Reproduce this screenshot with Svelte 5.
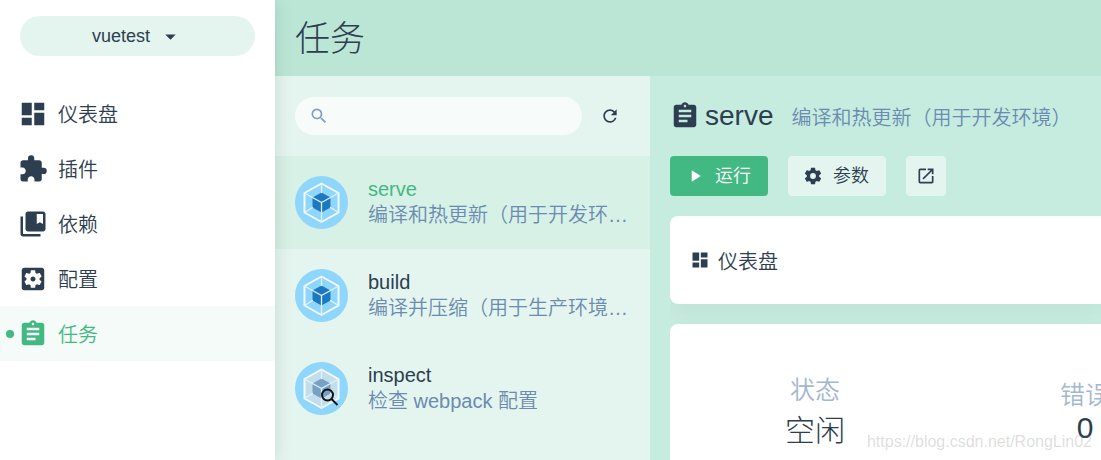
<script lang="ts">
	interface Task {
		name: string;
		description: string;
		inspect?: boolean;
	}

	const icons = {
		dashboard: 'M3 13h8V3H3v10zm0 8h8v-6H3v6zm10 0h8V11h-8v10zm0-18v6h8V3h-8z',
		extension:
			'M20.5 11H19V7c0-1.1-.9-2-2-2h-4V3.5a2.5 2.5 0 0 0-5 0V5H4c-1.1 0-1.99.9-1.99 2v3.8H3.5c1.49 0 2.7 1.21 2.7 2.7s-1.21 2.7-2.7 2.7H2V20c0 1.1.9 2 2 2h3.8v-1.5c0-1.49 1.21-2.7 2.7-2.7 1.49 0 2.7 1.21 2.7 2.7V22H17c1.1 0 2-.9 2-2v-4h1.5a2.5 2.5 0 0 0 0-5z',
		collections:
			'M4 6H2v14c0 1.1.9 2 2 2h14v-2H4V6zM20 2H8c-1.1 0-2 .9-2 2v12c0 1.1.9 2 2 2h12c1.1 0 2-.9 2-2V4c0-1.1-.9-2-2-2zm0 10l-2.5-1.5L15 12V4h5v8z',
		configuration:
			'M12 10c-1.1 0-2 .9-2 2s.9 2 2 2 2-.9 2-2-.9-2-2-2zm7-7H5c-1.11 0-2 .9-2 2v14c0 1.1.89 2 2 2h14c1.11 0 2-.9 2-2V5c0-1.1-.89-2-2-2zm-1.75 9c0 .23-.02.46-.05.68l1.48 1.16c.13.11.17.3.08.45l-1.4 2.42c-.09.15-.27.21-.43.15l-1.74-.7c-.36.28-.76.51-1.18.69l-.26 1.85c-.03.17-.18.3-.35.3h-2.8c-.17 0-.32-.13-.35-.29l-.26-1.85c-.43-.18-.82-.41-1.18-.69l-1.74.7c-.16.06-.34 0-.43-.15l-1.4-2.42c-.09-.15-.05-.34.08-.45l1.48-1.16c-.03-.23-.05-.46-.05-.69 0-.23.02-.46.05-.68l-1.48-1.16c-.13-.11-.17-.3-.08-.45l1.4-2.42c.09-.15.27-.21.43-.15l1.74.7c.36-.28.76-.51 1.18-.69l.26-1.85c.03-.17.18-.3.35-.3h2.8c.17 0 .32.13.35.29l.26 1.85c.43.18.82.41 1.18.69l1.74-.7c.16-.06.34 0 .43.15l1.4 2.42c.09.15.05.34-.08.45l-1.48 1.16c.03.23.05.46.05.69z',
		assignment:
			'M19 3h-4.18C14.4 1.84 13.3 1 12 1c-1.3 0-2.4.84-2.82 2H5c-1.1 0-2 .9-2 2v14c0 1.1.9 2 2 2h14c1.1 0 2-.9 2-2V5c0-1.1-.9-2-2-2zm-7 0c.55 0 1 .45 1 1s-.45 1-1 1-1-.45-1-1 .45-1 1-1zm2 14H7v-2h7v2zm3-4H7v-2h10v2zm0-4H7V7h10v2z',
		search:
			'M15.5 14h-.79l-.28-.27A6.471 6.471 0 0 0 16 9.5 6.5 6.5 0 1 0 9.5 16c1.61 0 3.09-.59 4.23-1.57l.27.28v.79l5 4.99L20.49 19l-4.99-5zm-6 0C7.01 14 5 11.99 5 9.5S7.01 5 9.5 5 14 7.01 14 9.5 11.99 14 9.5 14z',
		refresh:
			'M17.65 6.35A7.958 7.958 0 0 0 12 4c-4.42 0-7.99 3.58-7.99 8s3.57 8 7.99 8c3.73 0 6.84-2.55 7.73-6h-2.08A5.99 5.99 0 0 1 12 18c-3.31 0-6-2.69-6-6s2.69-6 6-6c1.66 0 3.14.69 4.22 1.78L13 11h7V4l-2.35 2.35z',
		settings:
			'M12 15.5A3.5 3.5 0 0 1 8.5 12 3.5 3.5 0 0 1 12 8.5a3.5 3.5 0 0 1 3.5 3.5 3.5 3.5 0 0 1-3.5 3.5M19.43 12.97C19.47 12.65 19.5 12.33 19.5 12C19.5 11.67 19.47 11.34 19.43 11L21.54 9.37C21.73 9.22 21.78 8.95 21.66 8.73L19.66 5.27C19.54 5.05 19.27 4.96 19.05 5.05L16.56 6.05C16.04 5.66 15.5 5.32 14.87 5.07L14.5 2.42C14.46 2.18 14.25 2 14 2H10C9.75 2 9.54 2.18 9.5 2.42L9.13 5.07C8.5 5.32 7.96 5.66 7.44 6.05L4.95 5.05C4.73 4.96 4.46 5.05 4.34 5.27L2.34 8.73C2.21 8.95 2.27 9.22 2.46 9.37L4.57 11C4.53 11.34 4.5 11.67 4.5 12C4.5 12.33 4.53 12.65 4.57 12.97L2.46 14.63C2.27 14.78 2.21 15.05 2.34 15.27L4.34 18.73C4.46 18.95 4.73 19.03 4.95 18.95L7.44 17.94C7.96 18.34 8.5 18.68 9.13 18.93L9.5 21.58C9.54 21.82 9.75 22 10 22H14C14.25 22 14.46 21.82 14.5 21.58L14.87 18.93C15.5 18.67 16.04 18.34 16.56 17.94L19.05 18.95C19.27 19.03 19.54 18.95 19.66 18.73L21.66 15.27C21.78 15.05 21.73 14.78 21.54 14.63L19.43 12.97Z',
		open: 'M19 19H5V5h7V3H5a2 2 0 0 0-2 2v14a2 2 0 0 0 2 2h14c1.1 0 2-.9 2-2v-7h-2v7zM14 3v2h3.59l-9.83 9.83 1.41 1.41L19 6.41V10h2V3h-7z',
		play: 'M8 5v14l11-7z',
		dropdown: 'M7 10l5 5 5-5z'
	};

	const views = [
		{ id: 'dashboard', label: '仪表盘', icon: icons.dashboard },
		{ id: 'plugins', label: '插件', icon: icons.extension },
		{ id: 'dependencies', label: '依赖', icon: icons.collections },
		{ id: 'configuration', label: '配置', icon: icons.configuration },
		{ id: 'tasks', label: '任务', icon: icons.assignment }
	];

	const tasks: Task[] = [
		{ name: 'serve', description: '编译和热更新（用于开发环境）' },
		{ name: 'build', description: '编译并压缩（用于生产环境…' },
		{ name: 'inspect', description: '检查 webpack 配置', inspect: true }
	];

	const stats = [
		{ label: '状态', value: '空闲' },
		{ label: '错误', value: '0' }
	];

	let currentView = $state('tasks');
	let selected = $state(0);
	let search = $state('');

	let task = $derived(tasks[selected]);
</script>

{#snippet icon(path: string)}
	<svg class="icon" viewBox="0 0 24 24" aria-hidden="true"><path d={path}></path></svg>
{/snippet}

{#snippet webpack(inspect: boolean | undefined)}
	<svg class="task-logo" viewBox="0 0 53 53" aria-hidden="true">
		<circle cx="26.5" cy="26.5" r="26.5" fill="#8ed6fb"></circle>
		<g stroke-linejoin="round" stroke-linecap="round">
			<path
				d="M26.5 7.5 43.5 17v19.5l-17 9.5-17-9.5V17z"
				fill={inspect ? '#c3deeb' : '#8ed6fb'}
				stroke="#f4fafe"
				stroke-width="2"
			></path>
			<path
				d="M26.5 16.5 35.5 21.5v10l-9 5-9-5v-10z"
				fill={inspect ? '#75a1c4' : '#1c78c0'}
			></path>
			<path
				d="M26.5 7.5v9M9.5 17l8 4.5M43.5 17l-8 4.5M9.5 36.5l8-5M43.5 36.5l-8-5M26.5 46V26.5M17.5 21.5l9 5 9-5"
				fill="none"
				stroke="#e2f2fb"
				stroke-width="1.3"
			></path>
		</g>
		{#if inspect}
			<g fill="none" stroke="#111" stroke-width="2">
				<circle cx="32.5" cy="33" r="5.5"></circle>
				<path d="M36.5 37l6 6"></path>
			</g>
		{/if}
	</svg>
{/snippet}

<div class="app">
	<aside class="sidebar">
		<button class="project">
			<span>vuetest</span>
			{@render icon(icons.dropdown)}
		</button>
		<nav>
			{#each views as view (view.id)}
				<a
					class="nav-item"
					class:active={view.id === currentView}
					href="#{view.id}"
					onclick={() => (currentView = view.id)}
				>
					{@render icon(view.icon)}
					<span>{view.label}</span>
				</a>
			{/each}
		</nav>
	</aside>

	<main>
		<header class="page-header">
			<h1>任务</h1>
		</header>

		<div class="panes">
			<section class="list">
				<div class="toolbar">
					<label class="search">
						{@render icon(icons.search)}
						<input type="search" aria-label="搜索" bind:value={search} />
					</label>
					<button class="refresh" aria-label="刷新">{@render icon(icons.refresh)}</button>
				</div>
				{#each tasks as item, i (item.name)}
					<button class="task" class:selected={i === selected} onclick={() => (selected = i)}>
						{@render webpack(item.inspect)}
						<span class="task-info">
							<span class="task-name">{item.name}</span>
							<span class="task-description">{item.description}</span>
						</span>
					</button>
				{/each}
			</section>

			<section class="details">
				<div class="title">
					{@render icon(icons.assignment)}
					<h2>{task.name}</h2>
					<span class="subtitle">{task.description}</span>
				</div>
				<div class="actions">
					<button class="btn primary">{@render icon(icons.play)}<span>运行</span></button>
					<button class="btn">{@render icon(icons.settings)}<span>参数</span></button>
					<button class="btn square" aria-label="打开">{@render icon(icons.open)}</button>
				</div>
				<div class="cards">
					<div class="card card-title">
						{@render icon(icons.dashboard)}
						<span>仪表盘</span>
					</div>
					<div class="card stats">
						{#each stats as stat (stat.label)}
							<div class="stat">
								<div class="stat-label">{stat.label}</div>
								<div class="stat-value">{stat.value}</div>
							</div>
						{/each}
					</div>
				</div>
			</section>
		</div>
	</main>

	<div class="watermark">https://blog.csdn.net/RongLin02</div>
</div>

<style>
	:global(body) {
		background: #c6ebdf;
	}

	.app {
		position: relative;
		display: flex;
		height: 100vh;
		overflow: hidden;
		color: #2c3e50;
		font-family: 'Liberation Sans', 'Noto Sans CJK SC', sans-serif;
		font-size: 20px;
		font-weight: 350;
	}

	button {
		border: none;
		padding: 0;
		color: inherit;
		font: inherit;
		cursor: pointer;
	}

	.icon {
		flex: none;
		width: 20px;
		height: 20px;
		fill: currentColor;
	}

	.sidebar {
		z-index: 1;
		flex: none;
		width: 275px;
		background: #fff;
		box-shadow: 0 0 18px rgba(0, 0, 0, 0.12);
	}

	.project {
		display: flex;
		align-items: center;
		justify-content: center;
		gap: 8px;
		width: calc(100% - 40px);
		height: 40px;
		margin: 16px 20px 30px;
		border-radius: 20px;
		background: #e4f5ef;
		font-size: 18px;
	}

	.project .icon {
		width: 25px;
		height: 25px;
	}

	.nav-item {
		position: relative;
		display: flex;
		align-items: center;
		gap: 10px;
		height: 55px;
		padding: 0 18px;
		color: inherit;
		text-decoration: none;
	}

	.nav-item .icon,
	.title .icon {
		width: 30px;
		height: 30px;
	}

	.nav-item.active {
		background: #f5fbf9;
		color: #42b983;
	}

	.nav-item.active::before {
		content: '';
		position: absolute;
		left: 6px;
		width: 8px;
		height: 8px;
		border-radius: 50%;
		background: #42b983;
	}

	main {
		flex: 1;
		min-width: 0;
		display: flex;
		flex-direction: column;
	}

	.page-header {
		flex: none;
		padding: 14px 20px 12px;
		background: #bbe6d5;
	}

	h1,
	h2 {
		margin: 0;
		font-weight: 300;
	}

	h1 {
		font-size: 35px;
		line-height: 50px;
	}

	.panes {
		flex: 1;
		display: flex;
		min-height: 0;
	}

	.list {
		flex: none;
		width: 375px;
		background: #e4f5ef;
	}

	.toolbar {
		display: flex;
		align-items: center;
		gap: 8px;
		height: 80px;
		padding: 0 20px;
	}

	.search {
		flex: 1;
		min-width: 0;
		display: flex;
		align-items: center;
		gap: 8px;
		height: 38px;
		padding: 0 14px;
		border-radius: 19px;
		background: #f7fcfa;
		color: #7f9fc4;
	}

	.search input {
		flex: 1;
		min-width: 0;
		border: none;
		outline: none;
		background: transparent;
		color: #2c3e50;
		font: inherit;
	}

	.refresh {
		flex: none;
		display: flex;
		align-items: center;
		justify-content: center;
		width: 40px;
		height: 40px;
		background: transparent;
	}

	.task {
		display: flex;
		align-items: center;
		gap: 20px;
		width: 100%;
		min-height: 93px;
		padding: 0 20px;
		background: transparent;
		text-align: left;
	}

	.task.selected {
		background: #d7f1e6;
	}

	.task-logo {
		flex: none;
		width: 53px;
		height: 53px;
	}

	.task-info {
		flex: 1;
		min-width: 0;
		padding-bottom: 1px;
		line-height: 26px;
	}

	.task-name,
	.task-description {
		display: block;
		overflow: hidden;
		text-overflow: ellipsis;
		white-space: nowrap;
	}

	.task.selected .task-name {
		color: #42b983;
	}

	.task-description,
	.subtitle {
		color: #6b8bb0;
	}

	.details {
		flex: 1;
		min-width: 0;
		display: flex;
		flex-direction: column;
		padding-left: 20px;
	}

	.title {
		flex: none;
		display: flex;
		align-items: center;
		height: 80px;
		white-space: nowrap;
	}

	.title h2 {
		margin: 0 18px 0 5px;
		font-size: 28px;
	}

	.actions {
		flex: none;
		display: flex;
		gap: 20px;
		margin-bottom: 20px;
	}

	.btn {
		display: flex;
		align-items: center;
		justify-content: center;
		gap: 10px;
		height: 40px;
		padding: 0 17px 0 15px;
		border-radius: 4px;
		background: #e4f5ef;
		font-size: 18px;
		line-height: 26px;
	}

	.btn.primary {
		background: #42b983;
		color: #fff;
	}

	.btn.square {
		width: 40px;
		padding: 0;
	}

	.cards {
		flex: 1;
		min-height: 0;
		display: flex;
		flex-direction: column;
		gap: 20px;
		overflow: hidden;
	}

	.card {
		border-radius: 8px 0 0 8px;
		background: #fff;
		box-shadow: 0 8px 24px rgba(0, 0, 0, 0.04);
	}

	.card-title {
		flex: none;
		display: flex;
		align-items: center;
		gap: 8px;
		height: 88px;
		padding: 0 20px;
	}

	.stats {
		flex: 1 0 auto;
		display: flex;
		align-items: center;
		padding: 50px 10px;
	}

	.stat {
		flex: none;
		width: 270px;
		text-align: center;
	}

	.stat-label {
		color: #a3b7d0;
		font-size: 25px;
		line-height: 32px;
	}

	.stat-value {
		font-size: 30px;
		font-weight: 300;
	}

	.watermark {
		position: absolute;
		z-index: 2;
		right: 9px;
		bottom: 9px;
		color: rgba(120, 120, 120, 0.25);
		font-size: 16px;
		line-height: 18px;
		pointer-events: none;
	}
</style>
